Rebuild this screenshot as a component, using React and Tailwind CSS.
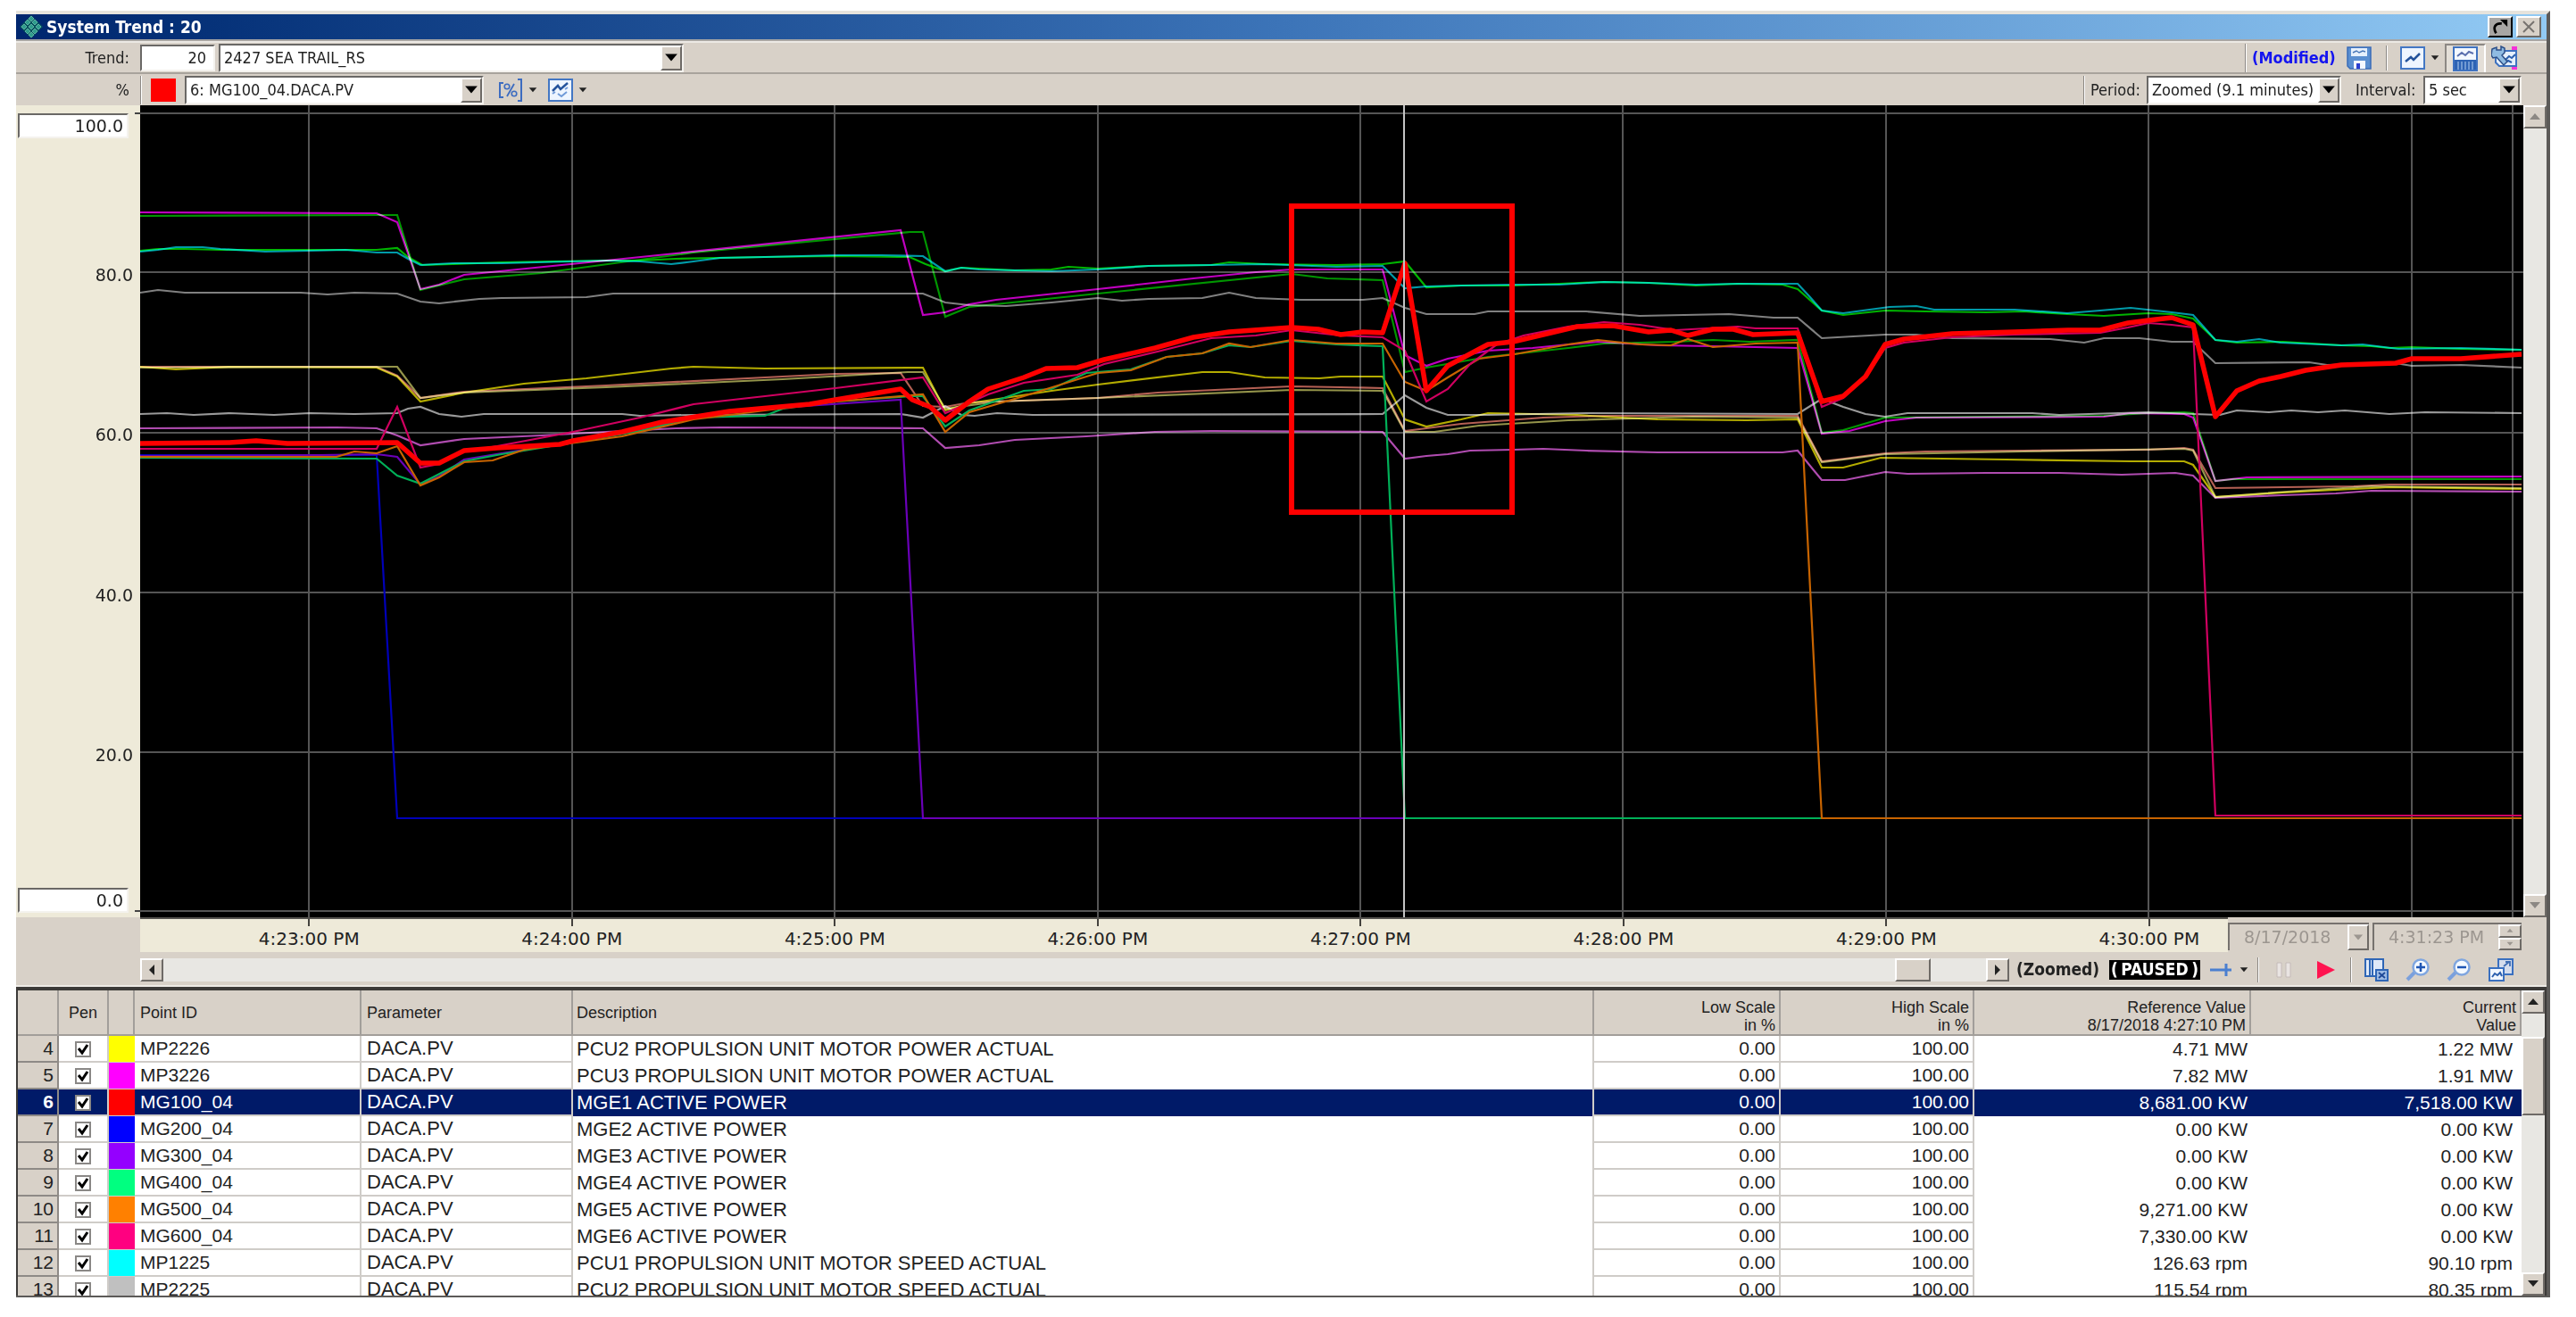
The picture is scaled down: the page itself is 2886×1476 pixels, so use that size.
import { useState } from 'react';

// ── Shared classes ────────────────────────────────────────────────────────────
const RAISED =
  'border-2 border-t-white border-l-white border-r-[#6e6a66] border-b-[#6e6a66] bg-[#d8d1c8]';
const SUNKEN =
  'border-2 border-t-[#6a6866] border-l-[#6a6866] border-r-[#f4f2ee] border-b-[#f4f2ee] bg-white';

// ── Chart data, in plot units (2670 wide, 910 high) ───────────────────────────
const GRID_X = [189, 484, 778, 1073, 1367, 1661, 1956, 2250, 2545, 2658];
const GRID_Y = [9, 187, 367, 546, 725, 903];

const TRENDS = [
  { id: 'MP1225', color: '#009aa8', points: '0,164 20,162 40,159 70,159 90,161 140,164 190,163 230,162 265,165 288,165 300,172 314,179 350,177 405,177 522,174 560,175 595,178 620,175 650,171 700,170 779,168 830,168 877,169 902,186 920,182 940,184 980,185 1021,186 1073,184 1130,180 1200,179 1260,178 1340,181 1392,180 1417,205 1441,203 1480,202 1538,201 1590,201 1640,198 1690,199 1743,201 1790,200 1857,200 1870,214 1884,230 1908,233 1930,230 1960,226 1990,225 2010,229 2100,229 2159,233 2196,230 2230,227 2276,232 2300,235 2325,263 2349,265 2374,262 2398,266 2466,269 2490,268 2530,273 2600,272 2668,274' },
  { id: 'MP1228', color: '#00b400', points: '0,163 20,161 50,161 90,162 265,162 288,160 300,170 316,179 350,178 405,176 522,174 560,174 600,172 700,170 779,169 850,170 862,170 880,178 902,186 920,182 940,183 980,185 1021,184 1040,181 1073,183 1130,180 1200,179 1220,176 1260,178 1340,179 1392,178 1417,175 1441,204 1480,202 1538,202 1590,200 1640,198 1690,199 1743,202 1790,200 1840,201 1857,206 1884,230 1908,235 1955,230 2000,231 2068,232 2110,231 2159,234 2200,236 2250,233 2276,234 2300,239 2325,263 2349,266 2400,265 2466,269 2500,270 2520,272 2545,271 2600,273 2668,274' },
  { id: 'MP3224', color: '#009600', points: '0,124 270,123 288,123 314,207 363,195 450,188 620,165 862,142 877,142 902,237 929,226 1073,211 1290,189 1330,194 1392,196 1417,299 1441,294 1510,282 1600,272 1640,267 1720,265 1762,263 1803,265 1857,263 1884,367 1908,364 1955,350 2200,348 2250,345 2290,344 2300,345 2325,421 2345,419 2668,419' },
  { id: 'MP3226', color: '#c000c0', points: '0,120 265,121 288,131 314,206 335,201 363,190 522,174 852,140 877,235 902,232 929,223 959,218 1073,206 1180,194 1250,187 1290,184 1392,184 1417,280 1441,292 1465,284 1510,275 1560,272 1633,265 1700,269 1762,270 1857,272 1884,368 1915,365 1955,354 1990,350 2200,349 2230,345 2290,346 2300,350 2325,421 2360,417 2668,416' },
  { id: 'MP2225', color: '#808080', points: '0,210 20,207 50,210 180,210 210,212 240,210 288,211 314,220 335,222 380,217 405,216 500,215 530,211 700,211 877,211 902,221 929,224 970,225 1021,221 1073,216 1100,219 1130,217 1190,216 1220,210 1250,216 1300,218 1370,218 1392,216 1417,227 1441,234 1495,234 1510,231 1620,231 1680,236 1780,234 1830,238 1857,238 1884,261 1955,257 1990,257 2030,261 2140,262 2178,266 2200,261 2240,261 2276,265 2300,265 2325,289 2430,288 2450,291 2527,289 2545,292 2600,291 2668,294' },
  { id: 'MP2226', color: '#b4ac00', points: '0,293 40,296 100,293 265,294 288,304 314,332 363,322 430,312 500,306 595,295 620,293 700,295 877,294 902,342 929,334 1021,320 1073,313 1190,299 1220,299 1260,305 1321,306 1345,304 1392,304 1417,352 1441,360 1480,352 1510,345 1610,347 1640,349 1700,352 1800,353 1857,352 1884,406 1908,406 1950,395 2090,397 2230,399 2290,399 2300,403 2325,439 2400,434 2520,428 2668,430' },
  { id: 'MP1226', color: '#b46054', points: '0,293 265,293 288,303 314,328 363,321 522,314 700,305 779,301 852,300 877,337 902,338 929,333 1073,328 1140,322 1290,315 1345,316 1392,317 1417,365 1441,362 1480,357 1572,350 1640,348 1857,348 1884,399 1910,396 1955,390 2000,388 2110,387 2250,386 2290,384 2300,386 2325,429 2480,427 2520,425 2668,425' },
  { id: 'MP1224', color: '#94944a', points: '0,294 270,293 288,293 314,328 363,322 522,316 720,307 860,299 877,299 902,340 960,332 1073,328 1290,319 1392,320 1417,366 1450,366 1500,359 1600,353 1740,349 1857,350 1884,400 1955,391 2110,388 2290,385 2300,387 2325,439 2420,432 2500,427 2668,429' },
  { id: 'MP2228', color: '#9a9a9a', points: '0,346 30,345 60,347 100,345 150,347 190,345 240,346 288,345 300,340 314,338 335,346 360,349 385,346 540,346 560,348 620,347 852,346 877,350 902,337 920,347 935,348 960,345 1000,347 1392,346 1417,325 1441,339 1465,347 1510,347 1620,345 1857,346 1884,329 1908,338 1933,346 1955,349 1980,345 2120,345 2150,347 2250,344 2300,346 2330,347 2349,342 2385,344 2410,342 2440,344 2470,342 2520,346 2560,344 2668,345' },
  { id: 'MP3225', color: '#b04cb0', points: '0,362 220,361 265,362 288,370 314,381 363,374 450,370 522,366 600,362 650,361 877,362 902,384 940,381 980,375 1060,371 1137,366 1200,365 1392,366 1417,396 1441,393 1465,391 1490,387 1538,386 1572,385 1620,387 1700,389 1840,389 1857,387 1884,420 1910,420 1955,411 1980,413 2068,412 2150,412 2220,414 2280,412 2300,415 2325,440 2400,437 2460,435 2500,432 2668,433' },
];

const GENERATORS = [
  { id: 'MG200_04', color: '#0000b8', points: '0,392 265,392 288,799 2668,799' },
  { id: 'MG300_04', color: '#6a00b8', points: '0,393 200,392 265,391 288,394 314,425 335,416 363,397 430,386 540,368 620,349 700,340 852,330 877,799 2668,799' },
  { id: 'MG400_04', color: '#00b058', points: '0,395 265,396 288,415 314,424 363,399 405,391 485,378 560,365 620,350 700,348 720,340 779,332 862,326 877,326 902,360 929,342 990,320 1021,318 1060,300 1110,296 1150,282 1190,278 1220,269 1244,271 1290,264 1340,268 1392,270 1417,799 2668,799' },
  { id: 'MG500_04', color: '#c86400', points: '0,394 220,394 240,388 265,390 288,382 314,426 335,417 363,400 395,398 430,386 540,371 620,352 700,342 779,332 877,324 902,366 929,344 990,326 1073,300 1110,297 1150,282 1190,278 1220,267 1244,271 1290,263 1340,267 1392,267 1417,310 1441,320 1465,305 1500,284 1540,279 1600,268 1633,263 1680,268 1715,269 1734,262 1762,271 1810,267 1857,266 1884,799 2668,799' },
  { id: 'MG600_04', color: '#d00060', points: '0,385 265,385 288,338 314,406 335,402 363,388 400,382 485,366 560,350 620,335 700,326 779,317 877,305 902,345 950,324 990,311 1050,302 1080,290 1140,276 1200,261 1250,258 1290,252 1345,258 1392,260 1417,275 1441,332 1465,318 1490,290 1520,268 1550,258 1600,248 1640,243 1680,246 1720,252 1790,248 1810,250 1857,250 1884,338 1908,328 1933,305 1955,272 1976,266 2030,260 2100,257 2196,255 2227,249 2250,244 2276,246 2300,249 2325,796 2668,796' },
];

const SELECTED_TREND =
  '0,379 100,378 130,376 165,379 288,378 314,401 335,401 363,387 400,384 470,380 485,376 540,366 585,355 660,343 750,335 779,330 852,318 865,330 885,338 902,353 929,332 950,318 990,305 1015,295 1050,294 1080,285 1137,272 1180,260 1220,254 1290,249 1320,251 1345,257 1370,254 1392,255 1417,177 1441,320 1465,292 1510,268 1538,265 1572,257 1610,248 1650,247 1690,254 1715,252 1734,258 1762,251 1785,251 1807,257 1857,255 1884,332 1908,326 1933,304 1955,268 1976,262 2030,256 2100,254 2160,252 2196,252 2227,244 2250,241 2276,238 2300,246 2325,349 2349,320 2374,309 2398,304 2426,297 2466,291 2527,289 2545,284 2600,284 2668,279';

const TIMES = ['4:23:00 PM', '4:24:00 PM', '4:25:00 PM', '4:26:00 PM', '4:27:00 PM', '4:28:00 PM', '4:29:00 PM', '4:30:00 PM'];

const ROWS = [
  { n: 4, swatch: 'bg-[#ffff00]', point: 'MP2226', desc: 'PCU2 PROPULSION UNIT MOTOR POWER ACTUAL', ref: '4.71 MW', cur: '1.22 MW' },
  { n: 5, swatch: 'bg-[#ff00ff]', point: 'MP3226', desc: 'PCU3 PROPULSION UNIT MOTOR POWER ACTUAL', ref: '7.82 MW', cur: '1.91 MW' },
  { n: 6, swatch: 'bg-[#ff0000]', point: 'MG100_04', desc: 'MGE1 ACTIVE POWER', ref: '8,681.00 KW', cur: '7,518.00 KW' },
  { n: 7, swatch: 'bg-[#0000ff]', point: 'MG200_04', desc: 'MGE2 ACTIVE POWER', ref: '0.00 KW', cur: '0.00 KW' },
  { n: 8, swatch: 'bg-[#9400ff]', point: 'MG300_04', desc: 'MGE3 ACTIVE POWER', ref: '0.00 KW', cur: '0.00 KW' },
  { n: 9, swatch: 'bg-[#00ff80]', point: 'MG400_04', desc: 'MGE4 ACTIVE POWER', ref: '0.00 KW', cur: '0.00 KW' },
  { n: 10, swatch: 'bg-[#ff8000]', point: 'MG500_04', desc: 'MGE5 ACTIVE POWER', ref: '9,271.00 KW', cur: '0.00 KW' },
  { n: 11, swatch: 'bg-[#ff0080]', point: 'MG600_04', desc: 'MGE6 ACTIVE POWER', ref: '7,330.00 KW', cur: '0.00 KW' },
  { n: 12, swatch: 'bg-[#00ffff]', point: 'MP1225', desc: 'PCU1 PROPULSION UNIT MOTOR SPEED ACTUAL', ref: '126.63 rpm', cur: '90.10 rpm' },
  { n: 13, swatch: 'bg-[#c0c0c0]', point: 'MP2225', desc: 'PCU2 PROPULSION UNIT MOTOR SPEED ACTUAL', ref: '115.54 rpm', cur: '80.35 rpm' },
];

// ── Small pieces ──────────────────────────────────────────────────────────────
const ARROWS = {
  down: 'M1 3h12l-6 7z',
  up: 'M1 10h12l-6-7z',
  left: 'M10 1v12l-6-6z',
  right: 'M4 1v12l6-6z',
};

function Arrow({ dir = 'down', className = 'size-3.5' }) {
  return (
    <svg viewBox="0 0 14 14" className={className} fill="currentColor" aria-hidden="true">
      <path d={ARROWS[dir]} />
    </svg>
  );
}

function ScrollButton({ dir, label, className = '' }) {
  return (
    <button
      type="button"
      aria-label={label}
      className={`flex size-[26px] shrink-0 items-center justify-center ${RAISED} ${className}`}
    >
      <Arrow dir={dir} className="size-3.5" />
    </button>
  );
}

function Combo({ id, label, value, className }) {
  return (
    <div className={`flex h-8 items-stretch ${SUNKEN} ${className}`}>
      <select id={id} aria-label={label} className="min-w-0 flex-1 appearance-none bg-white pl-1 leading-7 outline-none">
        <option>{value}</option>
      </select>
      <span className={`flex w-6 items-center justify-center text-black ${RAISED}`}>
        <Arrow className="size-4" />
      </span>
    </div>
  );
}

function Separator({ className = 'h-8' }) {
  return <span className={`w-0.5 shrink-0 border-l border-[#8c8884] bg-white ${className}`} />;
}

function ToolButton({ label, children, className = '' }) {
  return (
    <button type="button" aria-label={label} className={`flex shrink-0 items-center justify-center ${className}`}>
      {children}
    </button>
  );
}

function LogoIcon() {
  const cells = [[13, 4], [9, 8], [17, 8], [5, 13], [13, 13], [21, 13], [9, 18], [17, 18], [13, 22]];
  return (
    <svg viewBox="0 0 26 26" className="size-[26px]" aria-hidden="true">
      <path d="M13 0l13 13-13 13L0 13z" fill="#06525e" />
      {cells.map(([x, y]) => (
        <path key={`${x}-${y}`} d={`M${x} ${y - 3}l3 3-3 3-3-3z`} fill="#2f9c8c" stroke="#86d8c0" strokeWidth="0.6" />
      ))}
    </svg>
  );
}

function SaveIcon() {
  return (
    <svg viewBox="0 0 28 26" className="h-[26px] w-7" aria-hidden="true">
      <path d="M1 1h26v24H4l-3-3z" fill="#5b8fd0" stroke="#3a6cb8" strokeWidth="1.5" />
      <path d="M5 2h18v9H5z" fill="#e6f0fc" />
      <path d="M7 7l4-2 3 2 4-2 3 1" fill="none" stroke="#4a78b8" strokeWidth="1.5" />
      <path d="M8 16h13v9H8z" fill="#f4f8ff" />
      <path d="M11 19h4v6h-4z" fill="#2b3fd0" />
    </svg>
  );
}

function TrendIcon({ double = false }) {
  return (
    <svg viewBox="0 0 28 26" className="h-[26px] w-7" aria-hidden="true">
      <path d="M1 1h26v24H1z" fill="#eef5ff" stroke="#4377c4" strokeWidth="2" />
      <path d={double ? 'M5 14l6-6 3 4 8-7' : 'M6 17l6-5 3 3 7-7'} fill="none" stroke="#24539c" strokeWidth="2.5" />
      {double && <path d="M5 17l3-2M11 17l4 3 6-5M19 12l3-2" fill="none" stroke="#6f9ad8" strokeWidth="2" />}
    </svg>
  );
}

function TableTrendIcon() {
  return (
    <svg viewBox="0 0 28 28" className="size-7" aria-hidden="true">
      <path d="M1 1h26v26H1z" fill="#f2f7ff" stroke="#3f72c0" strokeWidth="2" />
      <path d="M5 11l5-4 4 3 4-4 5 2" fill="none" stroke="#5a6fae" strokeWidth="2" />
      <path d="M2 15h24v11H2z" fill="#2d63b4" />
      <path d="M6 17v9M10 17v9M14 17v9M18 17v9M22 17v9" stroke="#9fbfe8" strokeWidth="1.2" />
    </svg>
  );
}

function ConfigIcon() {
  return (
    <svg viewBox="0 0 30 28" className="h-7 w-[30px]" aria-hidden="true">
      <path d="M23 1h6v6h-6zM23 22h6v5h-6z" fill="#f531d8" />
      <path d="M5 6h23v17H9l-4-4z" fill="#e6f0fc" stroke="#3f72c0" strokeWidth="2" />
      <path d="M16 16l4-4 3 2 4-4M14 20l5-3 4 2" fill="none" stroke="#2b5fae" strokeWidth="2" />
      <path d="M1 4l5-2v3h5V1l4 2v5l-3 3 6 7-4 4-8-9-4 1-2-3z" fill="#8fbbe2" stroke="#2c4f88" strokeWidth="1.5" />
    </svg>
  );
}

function PercentIcon() {
  return (
    <svg viewBox="0 0 28 26" className="h-[26px] w-7" fill="none" stroke="#3d6cc0" aria-hidden="true">
      <path d="M6 5H2v16h4M22 1h4v24h-4" strokeWidth="2" />
      <path d="M18 6L10 20" strokeWidth="1.8" />
      <circle cx="10" cy="9" r="2.8" strokeWidth="1.6" />
      <circle cx="18" cy="17" r="2.8" strokeWidth="1.6" />
    </svg>
  );
}

function ZoomIcon({ plus = false }) {
  return (
    <svg viewBox="0 0 28 26" className="h-[26px] w-7" aria-hidden="true">
      <path d="M10 16L2 24" stroke="#7ba0dc" strokeWidth="4" />
      <circle cx="17" cy="10" r="8.5" fill="#f4f9ff" stroke="#7fa6e0" strokeWidth="2.5" />
      <path d={plus ? 'M12 10h10M17 5v10' : 'M12 10h10'} stroke="#1f56b4" strokeWidth="2.5" />
    </svg>
  );
}

function ColumnsIcon() {
  return (
    <svg viewBox="0 0 28 26" className="h-[26px] w-7" aria-hidden="true">
      <path d="M1 1h20v19H1z" fill="#dfe9f8" stroke="#2f66b6" strokeWidth="2" />
      <path d="M6 1v19M9 1v19" stroke="#2f66b6" strokeWidth="2" />
      <path d="M13 13h13v12H13z" fill="#9dbbe4" stroke="#2f66b6" strokeWidth="2" />
      <path d="M16 16l7 6M23 16l-7 6" stroke="#1d4896" strokeWidth="1.8" />
    </svg>
  );
}

function UndockIcon() {
  return (
    <svg viewBox="0 0 30 26" className="h-[26px] w-[30px]" aria-hidden="true">
      <path d="M12 1h16v17H12z" fill="#d4dcec" stroke="#3a70c0" strokeWidth="2" />
      <path d="M18 9l6-5M20 4h5v5" fill="none" stroke="#3f6db4" strokeWidth="1.8" />
      <path d="M2 11h16v14H2z" fill="#f2f7ff" stroke="#3a70c0" strokeWidth="2" />
      <path d="M5 21l3-4 3 2 3-3 2 4" fill="none" stroke="#2b5fae" strokeWidth="2" />
    </svg>
  );
}

// ── Title and toolbars ────────────────────────────────────────────────────────
function TitleBar() {
  return (
    <header className="flex h-7 items-center bg-linear-to-r from-[#00266e] via-[#3c74b8] to-[#92caf4] pr-1.5 pl-1 text-white">
      <LogoIcon />
      <h1 className="ml-1 flex-1 text-[19px] leading-7 font-bold">System Trend : 20</h1>
      <button type="button" aria-label="Restore" className="mr-1 flex h-6 w-7 items-center justify-center border-2 border-t-white border-l-white border-r-black border-b-black bg-[#a8a6a4]">
        <svg viewBox="0 0 22 20" className="h-[18px] w-5" aria-hidden="true">
          <path d="M6 18C2 12 4 5 13 6" fill="none" stroke="#000" strokeWidth="3" />
          <path d="M11 1h9v9z" fill="#000" />
        </svg>
      </button>
      <button type="button" aria-label="Close" className={`flex h-6 w-7 items-center justify-center ${RAISED}`}>
        <svg viewBox="0 0 16 14" className="h-3.5 w-4" aria-hidden="true">
          <path d="M2 1l12 12M14 1L2 13" stroke="#77736f" strokeWidth="2" />
        </svg>
      </button>
    </header>
  );
}

function TrendBar() {
  return (
    <div className="flex h-[35px] items-center border-b-2 border-[#a8a39c]">
      <label htmlFor="trend-number" className="w-[139px] pr-3 text-right">Trend:</label>
      <input id="trend-number" defaultValue="20" className={`h-[30px] w-[84px] pr-2 text-right outline-none ${SUNKEN}`} />
      <Combo label="Trend name" value="2427 SEA TRAIL_RS" className="ml-1 w-[521px]" />
      <div className="ml-auto flex h-full items-center pr-8">
        <Separator />
        <span className="ml-1.5 w-[98px] text-[18px] font-bold whitespace-nowrap text-[#1414f0]">(Modified)</span>
        <ToolButton label="Save trend" className="ml-2"><SaveIcon /></ToolButton>
        <Separator className="ml-4 h-7" />
        <ToolButton label="Chart type" className="ml-3.5 gap-1.5">
          <TrendIcon />
          <Arrow className="size-2.5" />
        </ToolButton>
        <ToolButton label="Show table" className="ml-1.5 h-8 w-[46px] border-t-2 border-r-2 border-l-2 border-t-[#8c8884] border-r-white border-l-[#8c8884] bg-[#e4dfd8]">
          <TableTrendIcon />
        </ToolButton>
        <ToolButton label="Configure" className="ml-1.5"><ConfigIcon /></ToolButton>
      </div>
    </div>
  );
}

function PenBar() {
  return (
    <div className="flex h-[35px] items-center">
      <label htmlFor="pen" className="w-[139px] pr-3 text-right">%</label>
      <Separator />
      <span className="ml-2.5 h-[26px] w-7 bg-[#ff0000]" />
      <Combo id="pen" value="6: MG100_04.DACA.PV" className="ml-2.5 w-[335px]" />
      <ToolButton label="Scale units" className="ml-4 gap-1.5">
        <PercentIcon />
        <Arrow className="size-2.5" />
      </ToolButton>
      <ToolButton label="Trend options" className="ml-3 gap-1.5">
        <TrendIcon double />
        <Arrow className="size-2.5" />
      </ToolButton>
      <div className="ml-auto flex h-full items-center pr-7">
        <Separator />
        <label htmlFor="period" className="ml-1.5 w-[63px]">Period:</label>
        <Combo id="period" value="Zoomed (9.1 minutes)" className="w-[218px]" />
        <label htmlFor="interval" className="ml-4 w-[76px]">Interval:</label>
        <Combo id="interval" value="5 sec" className="w-[110px]" />
      </div>
    </div>
  );
}

// ── Plot area ─────────────────────────────────────────────────────────────────
function ValueAxis() {
  const box = `ml-0.5 h-7 w-[124px] pr-1 text-right outline-none ${SUNKEN}`;
  return (
    <div className="relative flex w-[139px] shrink-0 flex-col bg-[#eeead9] pt-[9px] pb-[5px] font-['DejaVu_Sans','Verdana',sans-serif] text-[19px]">
      <input aria-label="High limit" defaultValue="100.0" className={box} />
      <div className="flex flex-1 flex-col justify-between pt-[139px] pr-2 pb-[135px] text-right leading-7">
        <span>80.0</span>
        <span>60.0</span>
        <span>40.0</span>
        <span>20.0</span>
      </div>
      <input aria-label="Low limit" defaultValue="0.0" className={box} />
      <span className="absolute top-2 right-0 h-0.5 w-1.5 bg-[#444]" />
      <span className="absolute right-0 bottom-1.5 h-0.5 w-1.5 bg-[#444]" />
    </div>
  );
}

function Plot() {
  return (
    <svg viewBox="0 0 2670 910" preserveAspectRatio="none" className="h-[910px] min-w-0 flex-1 bg-black" role="img" aria-label="Power trend">
      <g stroke="#555555" strokeWidth="2">
        {GRID_X.map((x) => <line key={x} x1={x} x2={x} y1="0" y2="910" />)}
        {GRID_Y.map((y) => <line key={y} x1="0" x2="2670" y1={y} y2={y} />)}
      </g>
      <g fill="none" strokeWidth="2.2">
        {TRENDS.map((t) => (
          <polyline key={t.id} points={t.points} stroke={t.color} className="mix-blend-screen" />
        ))}
        {GENERATORS.map((t) => <polyline key={t.id} points={t.points} stroke={t.color} />)}
      </g>
      <polyline points={SELECTED_TREND} fill="none" stroke="#ff0000" strokeWidth="5.5" strokeLinejoin="round" />
      <line x1="1416" x2="1416" y1="0" y2="910" stroke="#c4c4c4" strokeWidth="2" />
      <rect x="1290" y="113" width="247" height="343" fill="none" stroke="#ff0000" strokeWidth="6" />
    </svg>
  );
}

function TimeAxis() {
  return (
    <div className="flex h-[39px]">
      <div className="w-[139px] shrink-0" />
      <div className="grid min-w-0 flex-1 grid-cols-[repeat(7,294fr)_235fr] border-t-2 border-[#55534f] bg-[#eeead9] pl-[42px] font-['DejaVu_Sans','Verdana',sans-serif] text-[20px]">
        {TIMES.map((time) => (
          <div key={time} className="flex flex-col items-center whitespace-nowrap last:pl-[59px]">
            <span className="h-2 w-0.5 bg-[#44423e]" />
            <span className="leading-7">{time}</span>
          </div>
        ))}
      </div>
      <div className="flex gap-1 pt-1.5 pr-7 font-['DejaVu_Sans','Verdana',sans-serif] text-[19px] text-[#9c9690]">
        <div className="flex h-[31px] w-[158px] border-t-2 border-l-2 border-[#76726e]">
          <input aria-label="End date" disabled defaultValue="8/17/2018" className="min-w-0 flex-1 pl-4" />
          <span className={`flex w-6 items-center justify-center ${RAISED}`}><Arrow className="size-3" /></span>
        </div>
        <div className="flex h-[31px] w-[167px] border-t-2 border-l-2 border-[#76726e]">
          <input aria-label="End time" disabled defaultValue="4:31:23 PM" className="min-w-0 flex-1 pl-4" />
          <span className="flex w-[26px] flex-col">
            <span className={`flex flex-1 items-center justify-center ${RAISED}`}><Arrow dir="up" className="size-2" /></span>
            <span className={`flex flex-1 items-center justify-center ${RAISED}`}><Arrow className="size-2" /></span>
          </span>
        </div>
      </div>
    </div>
  );
}

function PlaybackBar() {
  return (
    <div className="flex h-[39px] items-center border-b-2 border-[#eeebe6] pt-0.5 pr-9">
      <div className="w-[139px] shrink-0" />
      <div className="flex h-[26px] min-w-0 flex-1 bg-[#e8e7e3]">
        <ScrollButton dir="left" label="Scroll back" />
        <div className="flex flex-1 justify-end pr-[62px]">
          <div className={`w-10 ${RAISED}`} />
        </div>
        <ScrollButton dir="right" label="Scroll forward" />
      </div>
      <span className="ml-2 w-[98px] text-[19px] font-bold whitespace-nowrap">(Zoomed)</span>
      <span className="ml-1.5 flex h-[22px] w-[102px] items-center justify-between bg-black px-0.5 text-[19px] leading-none font-bold text-white">
        <span>(</span>
        <span>PAUSED</span>
        <span>)</span>
      </span>
      <ToolButton label="Cursor mode" className="ml-2.5 gap-2">
        <svg viewBox="0 0 26 22" className="h-[22px] w-[26px]" stroke="#4a7fd0" strokeWidth="3" aria-hidden="true">
          <path d="M1 11h24M19 4v14" />
        </svg>
        <Arrow className="size-2.5" />
      </ToolButton>
      <Separator className="ml-2.5 h-7" />
      <ToolButton label="Pause" className="ml-[18px]">
        <svg viewBox="0 0 20 20" className="size-5" aria-hidden="true">
          <path d="M2 2h5v16H2zM12 2h5v16h-5z" fill="#e9e4e2" stroke="#c4bab8" />
        </svg>
      </ToolButton>
      <ToolButton label="Resume" className="ml-[26px]">
        <svg viewBox="0 0 22 22" className="size-[22px]" aria-hidden="true">
          <path d="M1 1l20 10L1 21z" fill="#ff1450" />
        </svg>
      </ToolButton>
      <Separator className="ml-4 h-7" />
      <ToolButton label="Clear columns" className="ml-3.5"><ColumnsIcon /></ToolButton>
      <ToolButton label="Zoom in" className="ml-[18px]"><ZoomIcon plus /></ToolButton>
      <ToolButton label="Zoom out" className="ml-[18px]"><ZoomIcon /></ToolButton>
      <ToolButton label="Undock" className="ml-[18px]"><UndockIcon /></ToolButton>
    </div>
  );
}

// ── Pen table ─────────────────────────────────────────────────────────────────
function PenRow({ row, selected, onSelect }) {
  const [visible, setVisible] = useState(true);
  const boxed = 'border-r-2 border-b-2 border-[#cfccc8]';
  return (
    <tr onClick={onSelect} className={`h-[30px] ${selected ? 'bg-[#001a68] text-white' : 'bg-white text-[#222]'}`}>
      <th
        scope="row"
        className={`border-r-2 border-b-2 border-[#8e8a86] pr-1 text-right text-[21px] ${selected ? 'font-bold' : 'bg-[#d8d1c8] font-normal'}`}
      >
        {row.n}
      </th>
      <td className={`text-center ${boxed}`}>
        <label className="inline-flex size-[18px] items-center justify-center border-2 border-[#8a8886] bg-white align-middle text-black">
          <input
            type="checkbox"
            aria-label={`Show pen ${row.point}`}
            checked={visible}
            onChange={() => setVisible(!visible)}
            className="sr-only"
          />
          {visible && (
            <svg viewBox="0 0 14 14" className="size-3.5" aria-hidden="true">
              <path d="M2 6l4 5 6-9" fill="none" stroke="currentColor" strokeWidth="3" />
            </svg>
          )}
        </label>
      </td>
      <td className={`border-b border-[#cfccc8] ${row.swatch}`} />
      <td className={`pl-1.5 text-[21px] ${boxed}`}>{row.point}</td>
      <td className={`pl-1.5 ${boxed}`}>DACA.PV</td>
      <td className="border-r-2 border-[#cfccc8] pl-1">{row.desc}</td>
      <td className={`pr-1 text-right text-[21px] ${boxed}`}>0.00</td>
      <td className={`pr-1 text-right text-[21px] ${boxed}`}>100.00</td>
      <td className="pr-1 text-right text-[21px]">{row.ref}</td>
      <td className="pr-2.5 text-right text-[21px]">{row.cur}</td>
    </tr>
  );
}

function PenTable() {
  const [selected, setSelected] = useState(6);
  const head = 'border-r-2 border-b-2 border-[#a29e9a] font-normal';
  return (
    <section className="flex h-[346px] overflow-hidden border-t-4 border-r-2 border-l-2 border-[#3c3a38] font-['Liberation_Sans','Arial',sans-serif]">
      <div className="min-w-0 flex-1 overflow-hidden bg-white">
        <table className="w-full table-fixed border-separate border-spacing-0 text-[22px] leading-7 whitespace-nowrap">
          <colgroup>
            <col className="w-[46px]" />
            <col className="w-[56px]" />
            <col className="w-[29px]" />
            <col className="w-[254px]" />
            <col className="w-[237px]" />
            <col />
            <col className="w-[209px]" />
            <col className="w-[217px]" />
            <col className="w-[310px]" />
            <col className="w-[303px]" />
          </colgroup>
          <thead>
            <tr className="h-[51px] bg-[#d8d1c8] text-left text-[18px] leading-5 text-[#222]">
              <th aria-label="Row" className={head} />
              <th className={`text-center ${head}`}>Pen</th>
              <th aria-label="Color" className={head} />
              <th className={`pl-1.5 ${head}`}>Point ID</th>
              <th className={`pl-1.5 ${head}`}>Parameter</th>
              <th className={`pl-1 ${head}`}>Description</th>
              <th className={`pt-2 pr-1 text-right ${head}`}>Low Scale<br />in %</th>
              <th className={`pt-2 pr-1 text-right ${head}`}>High Scale<br />in %</th>
              <th className={`pt-2 pr-1 text-right ${head}`}>Reference Value<br />8/17/2018 4:27:10 PM</th>
              <th className={`pt-2 pr-1 text-right ${head}`}>Current<br />Value</th>
            </tr>
          </thead>
          <tbody>
            {ROWS.map((row) => (
              <PenRow key={row.n} row={row} selected={selected === row.n} onSelect={() => setSelected(row.n)} />
            ))}
          </tbody>
        </table>
      </div>
      <div className="flex w-[26px] shrink-0 flex-col bg-[#e8e7e3]">
        <ScrollButton dir="up" label="Scroll table up" />
        <div className={`mt-[26px] h-[88px] ${RAISED}`} />
        <ScrollButton dir="down" label="Scroll table down" className="mt-auto" />
      </div>
    </section>
  );
}

// ── Page ──────────────────────────────────────────────────────────────────────
export default function App() {
  return (
    <div className="bg-white pt-3 pr-[29px] pb-6 pl-[18px]">
      <main className="flex flex-col border-t-4 border-r-4 border-b-2 border-t-[#e6e3dc] border-r-[#5c5a58] border-b-[#5c5a58] bg-[#d8d1c8] font-['DejaVu_Sans_Condensed','DejaVu_Sans','Tahoma',sans-serif] text-[18px] text-[#222]">
        <TitleBar />
        <div className="h-1 border-b-2 border-[#ece9e4] bg-[#a8a6a4]" />
        <TrendBar />
        <PenBar />
        <div className="flex">
          <ValueAxis />
          <Plot />
          <div className="flex w-[26px] shrink-0 flex-col justify-between bg-[#e8e7e3] text-[#8c8884]">
            <ScrollButton dir="up" label="Scroll values up" />
            <ScrollButton dir="down" label="Scroll values down" />
          </div>
        </div>
        <TimeAxis />
        <PlaybackBar />
        <PenTable />
      </main>
    </div>
  );
}
